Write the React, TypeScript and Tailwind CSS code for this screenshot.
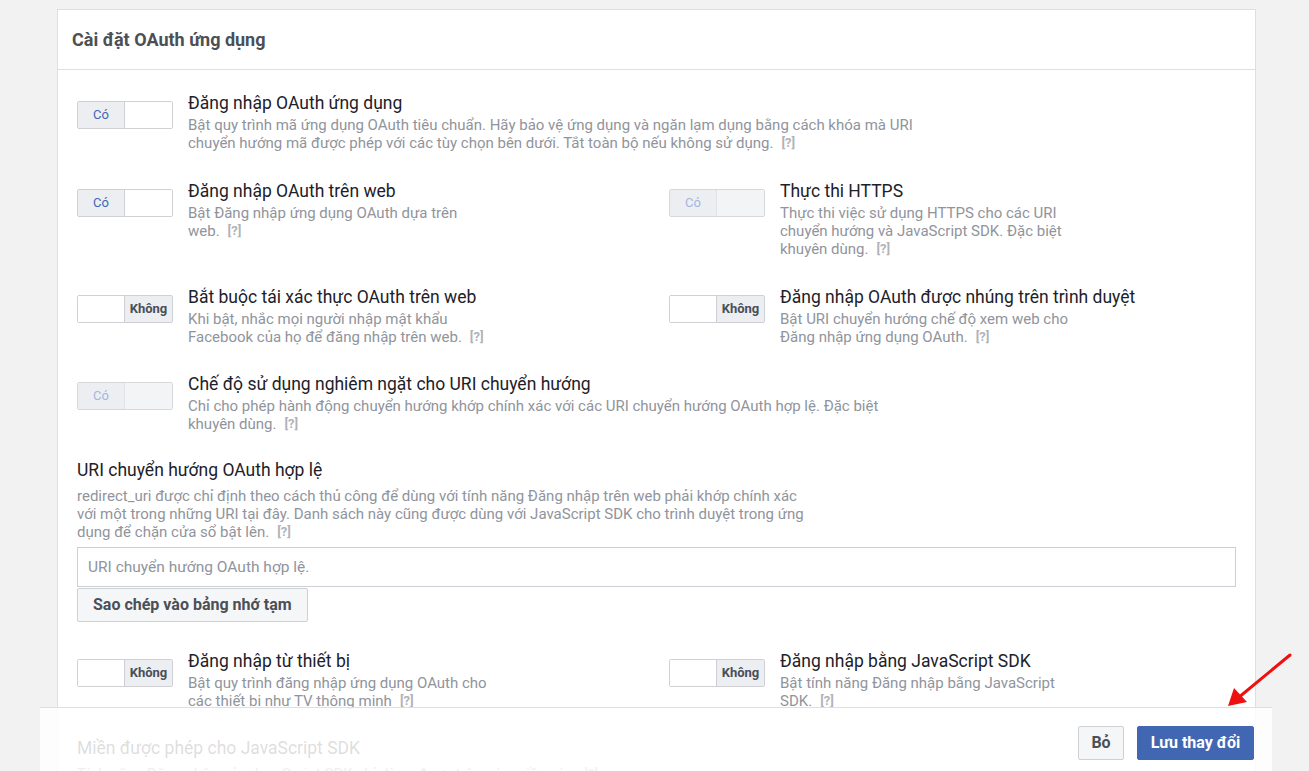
import React from "react";

type ToggleProps = { on: boolean; disabled?: boolean };

function Toggle({ on, disabled }: ToggleProps) {
  if (on) {
    return (
      <div
        className={`mt-[9px] flex h-[28px] w-[96px] shrink-0 overflow-hidden rounded-[2px] border ${
          disabled ? "border-[#d6d8dc]" : "border-[#ced0d4]"
        }`}
      >
        <div
          className={`flex w-[47px] items-center justify-center border-r text-[13px] ${
            disabled
              ? "border-[#dfe1e5] bg-[#eceef1] text-[#a3b6e0]"
              : "border-[#ced0d4] bg-[#eceef1] text-[#4267b2]"
          }`}
        >
          Có
        </div>
        <div className={`flex-1 ${disabled ? "bg-[#f3f4f6]" : "bg-white"}`} />
      </div>
    );
  }
  return (
    <div className="mt-[9px] flex h-[28px] w-[96px] shrink-0 overflow-hidden rounded-[2px] border border-[#ced0d4]">
      <div className="w-[47px] border-r border-[#ced0d4] bg-white" />
      <div className="flex flex-1 items-center justify-center bg-[#eceef1] text-[13px] font-bold text-[#4b4f56]">
        Không
      </div>
    </div>
  );
}

function Help() {
  return <span className="ml-[8px] align-top text-[13px] font-bold leading-[18px] text-[#b0b3b8]">[?]</span>;
}

type SettingProps = {
  on: boolean;
  disabled?: boolean;
  title: string;
  lines: string[];
};

function Setting({ on, disabled, title, lines }: SettingProps) {
  return (
    <div className="flex">
      <Toggle on={on} disabled={disabled} />
      <div className="ml-[15px]">
        <div className="whitespace-nowrap text-[17.5px] leading-[22px] text-[#1d2129]">{title}</div>
        <div className="mt-[2px] whitespace-nowrap text-[15px] leading-[18px] text-[#90949c]">
          {lines.map((l, i) => (
            <div key={i} className="h-[18px]">
              {l}
              {i === lines.length - 1 && <Help />}
            </div>
          ))}
        </div>
      </div>
    </div>
  );
}

export default function App(): React.ReactElement {
  return (
    <div className="relative h-screen w-full overflow-hidden bg-[#f2f2f2] font-['Roboto',sans-serif]">
      {/* Card */}
      <div className="ml-[57px] mt-[9px] w-[1199px] border border-[#dddfe2] bg-white">
        <div className="flex h-[60px] items-center border-b border-[#dddfe2] pl-[14px]">
          <h2 className="text-[18px] font-bold text-[#4b4f56]">Cài đặt OAuth ứng dụng</h2>
        </div>

        <div className="px-[19px] pt-[22px]">
          <div className="mb-[28px]">
            <Setting
              on
              title="Đăng nhập OAuth ứng dụng"
              lines={[
                "Bật quy trình mã ứng dụng OAuth tiêu chuẩn. Hãy bảo vệ ứng dụng và ngăn lạm dụng bằng cách khóa mà URI",
                "chuyển hướng mã được phép với các tùy chọn bên dưới. Tắt toàn bộ nếu không sử dụng.",
              ]}
            />
          </div>

          <div className="mb-[28px] grid grid-cols-[592px_1fr]">
            <Setting
              on
              title="Đăng nhập OAuth trên web"
              lines={["Bật Đăng nhập ứng dụng OAuth dựa trên", "web."]}
            />
            <Setting
              on
              disabled
              title="Thực thi HTTPS"
              lines={[
                "Thực thi việc sử dụng HTTPS cho các URI",
                "chuyển hướng và JavaScript SDK. Đặc biệt",
                "khuyên dùng.",
              ]}
            />
          </div>

          <div className="mb-[27px] grid grid-cols-[592px_1fr]">
            <Setting
              on={false}
              title="Bắt buộc tái xác thực OAuth trên web"
              lines={["Khi bật, nhắc mọi người nhập mật khẩu", "Facebook của họ để đăng nhập trên web."]}
            />
            <Setting
              on={false}
              title="Đăng nhập OAuth được nhúng trên trình duyệt"
              lines={["Bật URI chuyển hướng chế độ xem web cho", "Đăng nhập ứng dụng OAuth."]}
            />
          </div>

          <div className="mb-[26px]">
            <Setting
              on
              disabled
              title="Chế độ sử dụng nghiêm ngặt cho URI chuyển hướng"
              lines={[
                "Chỉ cho phép hành động chuyển hướng khớp chính xác với các URI chuyển hướng OAuth hợp lệ. Đặc biệt",
                "khuyên dùng.",
              ]}
            />
          </div>

          {/* Redirect URIs */}
          <div className="mb-[28px]">
            <div className="text-[17.5px] leading-[22px] text-[#1d2129]">URI chuyển hướng OAuth hợp lệ</div>
            <div className="mt-[6px] whitespace-nowrap text-[15px] leading-[18px] text-[#90949c]">
              <div className="h-[18px]">
                redirect_uri được chỉ định theo cách thủ công để dùng với tính năng Đăng nhập trên web phải khớp chính xác
              </div>
              <div className="h-[18px]">
                với một trong những URI tại đây. Danh sách này cũng được dùng với JavaScript SDK cho trình duyệt trong ứng
              </div>
              <div className="h-[18px]">
                dụng để chặn cửa sổ bật lên.
                <Help />
              </div>
            </div>
            <input
              placeholder="URI chuyển hướng OAuth hợp lệ."
              className="mt-[6px] block h-[40px] w-full border border-[#ccd0d5] px-[10px] text-[15.5px] text-[#1d2129] outline-none placeholder:text-[#90949c]"
            />
            <button className="mt-[1px] h-[34px] rounded-[2px] border border-[#ced0d4] bg-[#f5f6f7] px-[15px] text-[16px] font-bold text-[#4b4f56]">
              Sao chép vào bảng nhớ tạm
            </button>
          </div>

          <div className="mb-[27px] grid grid-cols-[592px_1fr]">
            <Setting
              on={false}
              title="Đăng nhập từ thiết bị"
              lines={["Bật quy trình đăng nhập ứng dụng OAuth cho", "các thiết bị như TV thông minh"]}
            />
            <Setting
              on={false}
              title="Đăng nhập bằng JavaScript SDK"
              lines={["Bật tính năng Đăng nhập bằng JavaScript", "SDK."]}
            />
          </div>

          <div className="pb-[40px]">
            <div className="text-[17.5px] leading-[22px] text-[#1d2129]">Miền được phép cho JavaScript SDK</div>
            <div className="mt-[6px] whitespace-nowrap text-[15px] leading-[18px] text-[#90949c]">
              Tính năng Đăng nhập của JavaScript SDK chỉ dùng được trên các miền này.
              <Help />
            </div>
          </div>
        </div>
      </div>

      {/* Sticky save bar */}
      <div className="absolute left-[40px] top-[707px] flex h-[80px] w-[1232px] justify-end gap-[13px] border-t border-[#dddfe2] bg-white/85 pr-[18px] pt-[18px]">
        <button className="h-[34px] w-[46px] rounded-[2px] border border-[#ced0d4] bg-[#f5f6f7] text-[16px] font-bold text-[#4b4f56]">
          Bỏ
        </button>
        <button className="h-[34px] w-[117px] rounded-[2px] border border-[#4267b2] bg-[#4267b2] text-[16px] font-bold text-white">
          Lưu thay đổi
        </button>
      </div>

      {/* Red annotation arrow */}
      <svg className="absolute left-[1220px] top-[648px]" width="80" height="66" viewBox="0 0 80 66">
        <line x1="70" y1="7" x2="18" y2="50" stroke="#ee1111" strokeWidth="3" strokeLinecap="round" />
        <polygon points="8,58 14,40 27,54" fill="#ee1111" />
      </svg>
    </div>
  );
}
